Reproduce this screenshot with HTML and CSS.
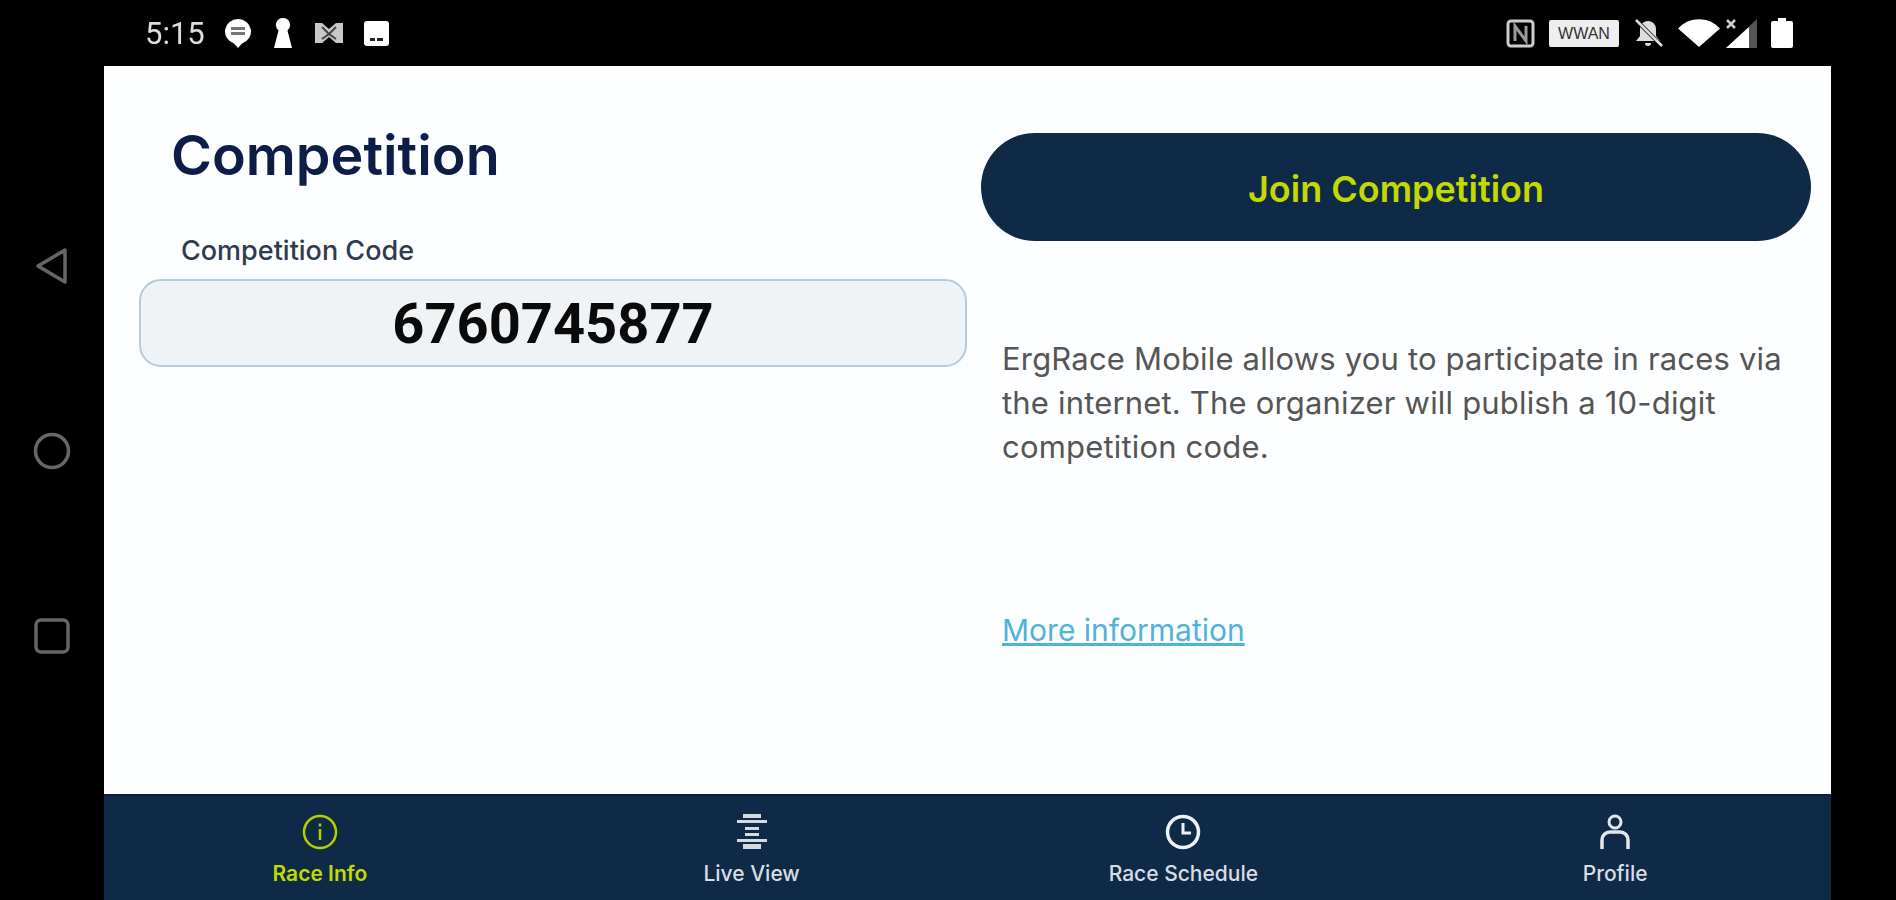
FILE: index.html
```html
<!DOCTYPE html>
<html lang="en">
<head>
  <meta charset="UTF-8">
  <meta name="viewport" content="width=device-width, initial-scale=1.0">
  <title>ErgRace Mobile - Competition</title>
  <link rel="stylesheet" href="styles.css">
</head>
<body>

<div class="device">
  <!-- Android navigatie -->
  <nav class="rail">
    <svg width="38" height="38" viewBox="0 0 38 38"><path d="M32 3 L5 19 L32 35 Z" fill="none" stroke="#666" stroke-width="3.5" stroke-linejoin="round"/></svg>
    <svg width="38" height="38" viewBox="0 0 38 38"><circle cx="19" cy="19" r="16.5" fill="none" stroke="#666" stroke-width="3.5"/></svg>
    <svg width="38" height="38" viewBox="0 0 38 38"><rect x="3" y="3" width="32" height="32" rx="5" fill="none" stroke="#666" stroke-width="3.5"/></svg>
  </nav>

  <div class="screen">
    <header class="statusbar">
      <div class="status-group">
        <span class="clock">5:15</span>
        <svg width="28" height="30" viewBox="0 0 28 30"><path d="M14 1a13 12.5 0 0 1 4 24.4L14 30l-4-4.6A13 12.5 0 0 1 14 1Z" fill="#fff"/><path d="M7 9h14v3H7zM7 14h14v3H7z" fill="#777"/></svg>
        <svg width="22" height="30" viewBox="0 0 22 30"><path d="M11 0a7 7 0 0 1 4.500 12.400L20 30H2l4.500-17.600A7 7 0 0 1 11 0Z" fill="#fff"/></svg>
        <svg width="30" height="22" viewBox="0 0 30 22"><path d="M1 1h7l7 6 7-6h7v20h-7l-7-6-7 6H1Z" fill="#c8c8c8"/><path d="M8 5l7 7 7-7M8 17l7-5 7 5" fill="none" stroke="#444" stroke-width="2"/></svg>
        <svg width="25" height="25" viewBox="0 0 25 25"><rect width="25" height="25" rx="3" fill="#fff"/><path d="M6 17h5v3H6zM13 17h6v3h-6z" fill="#222"/></svg>
      </div>
      <div class="status-group status-right">
        <svg width="29" height="29" viewBox="0 0 29 29"><rect x="2" y="2" width="25" height="25" rx="3" fill="none" stroke="#ccc" stroke-width="3"/><path d="M9 22V7l11 15V7" fill="none" stroke="#999" stroke-width="3"/></svg>
        <span class="wwan">WWAN</span>
        <svg width="31" height="29" viewBox="0 0 31 29"><path d="M15 2a8 8 0 0 1 8 8v7l4 5H3l4-5v-7a8 8 0 0 1 8-8Zm-3 22h6a3 3 0 0 1-6 0Z" fill="#ddd"/><path d="M3 1l27 27" stroke="#000" stroke-width="4"/><path d="M3 1l26 26" stroke="#ddd" stroke-width="2.5"/></svg>
        <svg width="42" height="28" viewBox="0 0 42 28"><path d="M0 9.500C11-3 31-3 42 9.500L21 28Z" fill="#fff"/></svg>
        <svg class="ic-signal" width="31" height="29" viewBox="0 0 31 29"><path d="M31 0v29H0Z" fill="#555"/><path d="M23 8v21H0Z" fill="#fff"/><path d="M1 1l8 8M9 1L1 9" stroke="#ccc" stroke-width="2.5"/></svg>
        <svg width="22" height="30" viewBox="0 0 22 30"><path d="M7 0h8v3h5a2 2 0 0 1 2 2v23a2 2 0 0 1-2 2H2a2 2 0 0 1-2-2V5a2 2 0 0 1 2-2h5Z" fill="#fff"/></svg>
      </div>
    </header>

    <main class="app">
      <div class="content">
        <section class="col-left">
          <h1>Competition</h1>
          <label class="code-label">Competition Code</label>
          <div class="code-input">6760745877</div>
        </section>
        <section class="col-right">
          <button class="join-btn">Join Competition</button>
          <p class="intro">ErgRace Mobile allows you to participate in races via the internet. The organizer will publish a 10-digit competition code.</p>
          <a class="more" href="#">More information</a>
        </section>
      </div>

      <nav class="tabbar">
        <div class="tab active">
          <svg width="36" height="36" viewBox="0 0 36 36"><circle cx="18" cy="18" r="16" fill="none" stroke="#b5cc00" stroke-width="2.5"/><path d="M18 15v11M18 9.500v3" stroke="#b5cc00" stroke-width="2.5"/></svg>
          <span>Race Info</span>
        </div>
        <div class="tab">
          <svg width="36" height="36" viewBox="0 0 36 36"><g fill="#d5dae0"><rect x="9" y="0" width="18" height="4"/><rect x="3" y="6" width="30" height="3"/><rect x="11" y="13" width="14" height="3"/><rect x="11" y="19" width="14" height="3"/><rect x="3" y="25" width="30" height="3"/><rect x="9" y="30" width="18" height="5"/></g></svg>
          <span>Live View</span>
        </div>
        <div class="tab">
          <svg width="36" height="36" viewBox="0 0 36 36"><circle cx="18" cy="18" r="15.500" fill="none" stroke="#eef1f4" stroke-width="3.5"/><path d="M18 9v10h8" fill="none" stroke="#eef1f4" stroke-width="3"/></svg>
          <span>Race Schedule</span>
        </div>
        <div class="tab">
          <svg width="36" height="36" viewBox="0 0 36 36"><circle cx="18" cy="8" r="6" fill="none" stroke="#e3e7eb" stroke-width="3"/><path d="M5 35V26a8 8 0 0 1 8-8h10a8 8 0 0 1 8 8v9" fill="none" stroke="#e3e7eb" stroke-width="3.5"/></svg>
          <span>Profile</span>
        </div>
      </nav>
    </main>
  </div>
</div>

</body>
</html>
```

FILE: styles.css
```css
* {
  box-sizing: border-box;
}
html, body {
  margin: 0;
  height: 100%;
  background: #000;
  overflow: hidden;
}
body {
  font-family: Inter, "Open Sans", sans-serif;
}
/* de bron is een opgeschaalde, wazige schermafbeelding */
.device {
  display: flex;
  height: 900px;
  padding-right: 65px;
  filter: blur(0.7px);
}
.rail {
  width: 104px;
  flex: none;
  display: flex;
  flex-direction: column;
  align-items: center;
  justify-content: center;
  gap: 147px;
  padding-top: 2px;
}
.screen {
  flex: 1;
  display: flex;
  flex-direction: column;
  min-width: 0;
}
.statusbar {
  height: 66px;
  flex: none;
  display: flex;
  justify-content: space-between;
  align-items: center;
  padding: 0 38px 0 41px;
}
.status-group {
  display: flex;
  align-items: center;
  gap: 20px;
}
.status-right {
  gap: 14px;
}
.ic-signal {
  margin-left: -8px;
}
.clock {
  font-family: Roboto, sans-serif;
  font-size: 31px;
  color: #ddd;
  margin-right: -1px;
}
.wwan {
  width: 70px;
  height: 27px;
  background: #eee;
  color: #333;
  font-family: "Liberation Sans", sans-serif;
  font-size: 16px;
  line-height: 27px;
  text-align: center;
  border-radius: 2px;
}
.app {
  flex: 1;
  display: flex;
  flex-direction: column;
  background: #fdfeff;
  min-height: 0;
}
.content {
  flex: 1;
  display: grid;
  grid-template-columns: 877px 830px;
  min-height: 0;
}
.col-left {
  padding-left: 35px;
}
.col-left h1 {
  margin: 59px 0 0 32px;
  font-size: 55.6px;
  line-height: 60px;
  font-weight: 600;
  color: #0e1c48;
}
.code-label {
  display: block;
  margin: 51px 0 0 42px;
  font-size: 27px;
  line-height: 30px;
  font-weight: 500;
  color: #2f3b4d;
}
.code-input {
  width: 828px;
  height: 88px;
  margin-top: 13px;
  background: #f0f3f6;
  border: 2px solid #b4cbe0;
  border-radius: 22px;
  font-family: Roboto, sans-serif;
  font-size: 56px;
  font-weight: bold;
  line-height: 86px;
  text-align: center;
  color: #0a0a0a;
}
.col-right {
  padding-top: 67px;
  display: flex;
  flex-direction: column;
  align-items: flex-start;
}
.join-btn {
  width: 830px;
  height: 108px;
  padding-top: 4px;
  border: 0;
  border-radius: 54px;
  background: #0f2a47;
  color: #c4d900;
  font-family: inherit;
  font-size: 36px;
  font-weight: 600;
}
.intro {
  margin: 96px 0 0 21px;
  width: 790px;
  font-size: 31px;
  line-height: 44px;
  letter-spacing: 0.18px;
  color: #555;
}
.more {
  margin: 143px 0 0 21px;
  font-size: 30px;
  color: #4fb3d9;
}
.tabbar {
  height: 106px;
  flex: none;
  display: grid;
  grid-template-columns: repeat(4, 1fr);
  background: #0f2a47;
  border-top: 2px solid #0c2038;
}
.tab {
  display: flex;
  flex-direction: column;
  align-items: center;
  padding-top: 18px;
  color: #d8dde3;
  font-size: 21px;
  font-weight: 500;
}
.tab span {
  margin-top: 11px;
  line-height: 26px;
}
.tab.active {
  color: #c4d900;
  font-weight: 600;
}
```
